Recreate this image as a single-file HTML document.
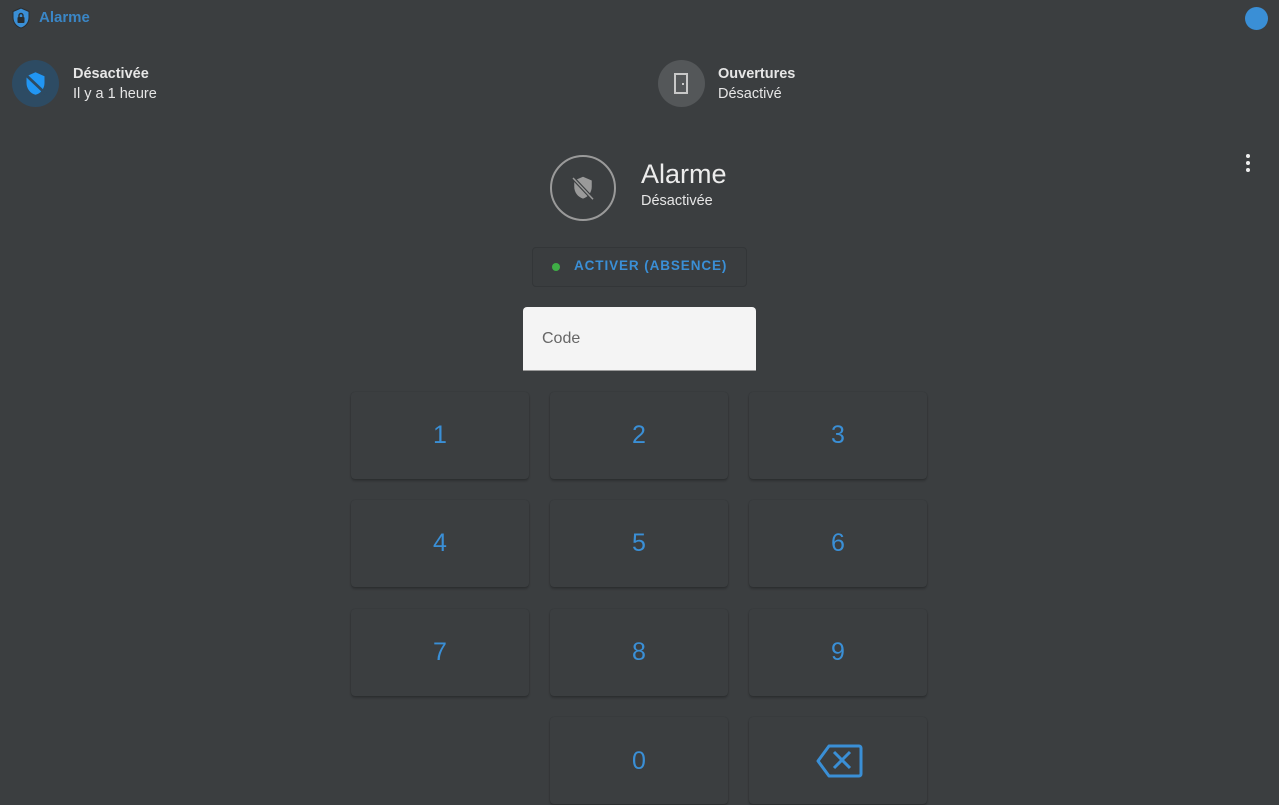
<!DOCTYPE html>
<html><head><meta charset="utf-8"><style>
*{margin:0;padding:0;box-sizing:border-box}
body{width:1279px;height:797px;overflow:hidden;background:#3b3e40;font-family:"Liberation Sans",sans-serif;position:relative;color:#e6e6e6}
.a{position:absolute}
.key{position:absolute;width:178px;height:87px;background:#3b3e40;border-radius:4px;box-shadow:0 2px 2px rgba(0,0,0,.22),0 0 1px rgba(0,0,0,.25);color:#3a8fd6;font-size:25px;text-align:center;line-height:86px}
</style></head><body>
<svg class="a" style="left:11px;top:7px" width="20" height="22" viewBox="0 0 20 22"><path d="M10 1L2 4.5v6c0 5 3.4 9.3 8 10.5 4.6-1.2 8-5.5 8-10.5v-6z" fill="#3a8fd6" stroke="#2a2d2f" stroke-width="1"/><rect x="6.5" y="10" width="7" height="6" rx="1" fill="#2a2d2f"/><path d="M8 10V8.5a2 2 0 014 0V10" fill="none" stroke="#2a2d2f" stroke-width="1.4"/></svg>
<div class="a" style="left:39px;top:9px;font-size:15px;font-weight:bold;color:#3a86c6">Alarme</div>
<div class="a" style="left:1245px;top:7px;width:23px;height:23px;border-radius:50%;background:#3a8fd6"></div>

<div class="a" style="left:12px;top:60px;width:47px;height:47px;border-radius:50%;background:#2d4b63"></div>
<svg class="a" style="left:22px;top:70px" width="27" height="27" viewBox="0 0 24 24"><path d="M12 2L4 5.5v6c0 5 3.4 9.3 8 10.5 4.6-1.2 8-5.5 8-10.5v-6z" fill="#2196f3"/><path d="M3 4l18 17" stroke="#2d4b63" stroke-width="2.5"/></svg>
<div class="a" style="left:73px;top:66px;font-size:14.5px;font-weight:bold">Désactivée</div>
<div class="a" style="left:73px;top:86px;font-size:14.5px">Il y a 1 heure</div>

<div class="a" style="left:658px;top:60px;width:47px;height:47px;border-radius:50%;background:#545759"></div>
<svg class="a" style="left:672px;top:73px" width="18" height="21" viewBox="0 0 18 21"><rect x="3" y="1" width="12" height="19" fill="none" stroke="#c8c8c8" stroke-width="2"/><rect x="10" y="10" width="2" height="2" fill="#c8c8c8"/></svg>
<div class="a" style="left:718px;top:66px;font-size:14.5px;font-weight:bold">Ouvertures</div>
<div class="a" style="left:718px;top:86px;font-size:14.5px">Désactivé</div>

<div class="a" style="left:1246px;top:154px;width:4px;height:4px;border-radius:50%;background:#eee;box-shadow:0 7px 0 #eee,0 14px 0 #eee"></div>

<div class="a" style="left:550px;top:155px;width:66px;height:66px;border-radius:50%;border:2px solid #9a9a9a"></div>
<svg class="a" style="left:568px;top:173px" width="30" height="30" viewBox="0 0 24 24"><path d="M12 3L5 6v5c0 4.5 3 8.3 7 9.5 4-1.2 7-5 7-9.5V6z" fill="#9a9a9a"/><path d="M4 4l16 17" stroke="#3b3e40" stroke-width="3"/><path d="M4 4l16 17" stroke="#9a9a9a" stroke-width="1.2"/></svg>
<div class="a" style="left:641px;top:159px;font-size:27px;color:#ececec">Alarme</div>
<div class="a" style="left:641px;top:193px;font-size:14.5px">Désactivée</div>

<div class="a" style="left:532px;top:247px;width:215px;height:40px;border:1px solid #333638;border-radius:4px;background:#3a3d3f"></div>
<div class="a" style="left:552px;top:263px;width:8px;height:8px;border-radius:50%;background:#3fae46"></div>
<div class="a" style="left:574px;top:258px;font-size:13.5px;font-weight:bold;letter-spacing:0.9px;color:#3a8fd6">ACTIVER (ABSENCE)</div>

<div class="a" style="left:523px;top:307px;width:233px;height:64px;background:#f4f4f4;border-radius:4px 4px 0 0;border-bottom:1px solid #9a9a9a"></div>
<div class="a" style="left:542px;top:330px;font-size:16px;color:#666">Code</div>

<div class="key" style="left:351px;top:392px">1</div>
<div class="key" style="left:550px;top:392px">2</div>
<div class="key" style="left:749px;top:392px">3</div>
<div class="key" style="left:351px;top:500px">4</div>
<div class="key" style="left:550px;top:500px">5</div>
<div class="key" style="left:749px;top:500px">6</div>
<div class="key" style="left:351px;top:609px">7</div>
<div class="key" style="left:550px;top:609px">8</div>
<div class="key" style="left:749px;top:609px">9</div>
<div class="key" style="left:550px;top:717px;line-height:88px">0</div>
<div class="key" style="left:749px;top:717px"></div>
<svg class="a" style="left:815px;top:743px" width="48" height="36" viewBox="0 0 48 36"><path d="M14 3H44a2 2 0 012 2V31a2 2 0 01-2 2H14L3 18z" fill="none" stroke="#3a8fd6" stroke-width="3" stroke-linejoin="round"/><path d="M19 9L35 25M35 9L19 25" stroke="#3a8fd6" stroke-width="3"/></svg>
</body></html>
